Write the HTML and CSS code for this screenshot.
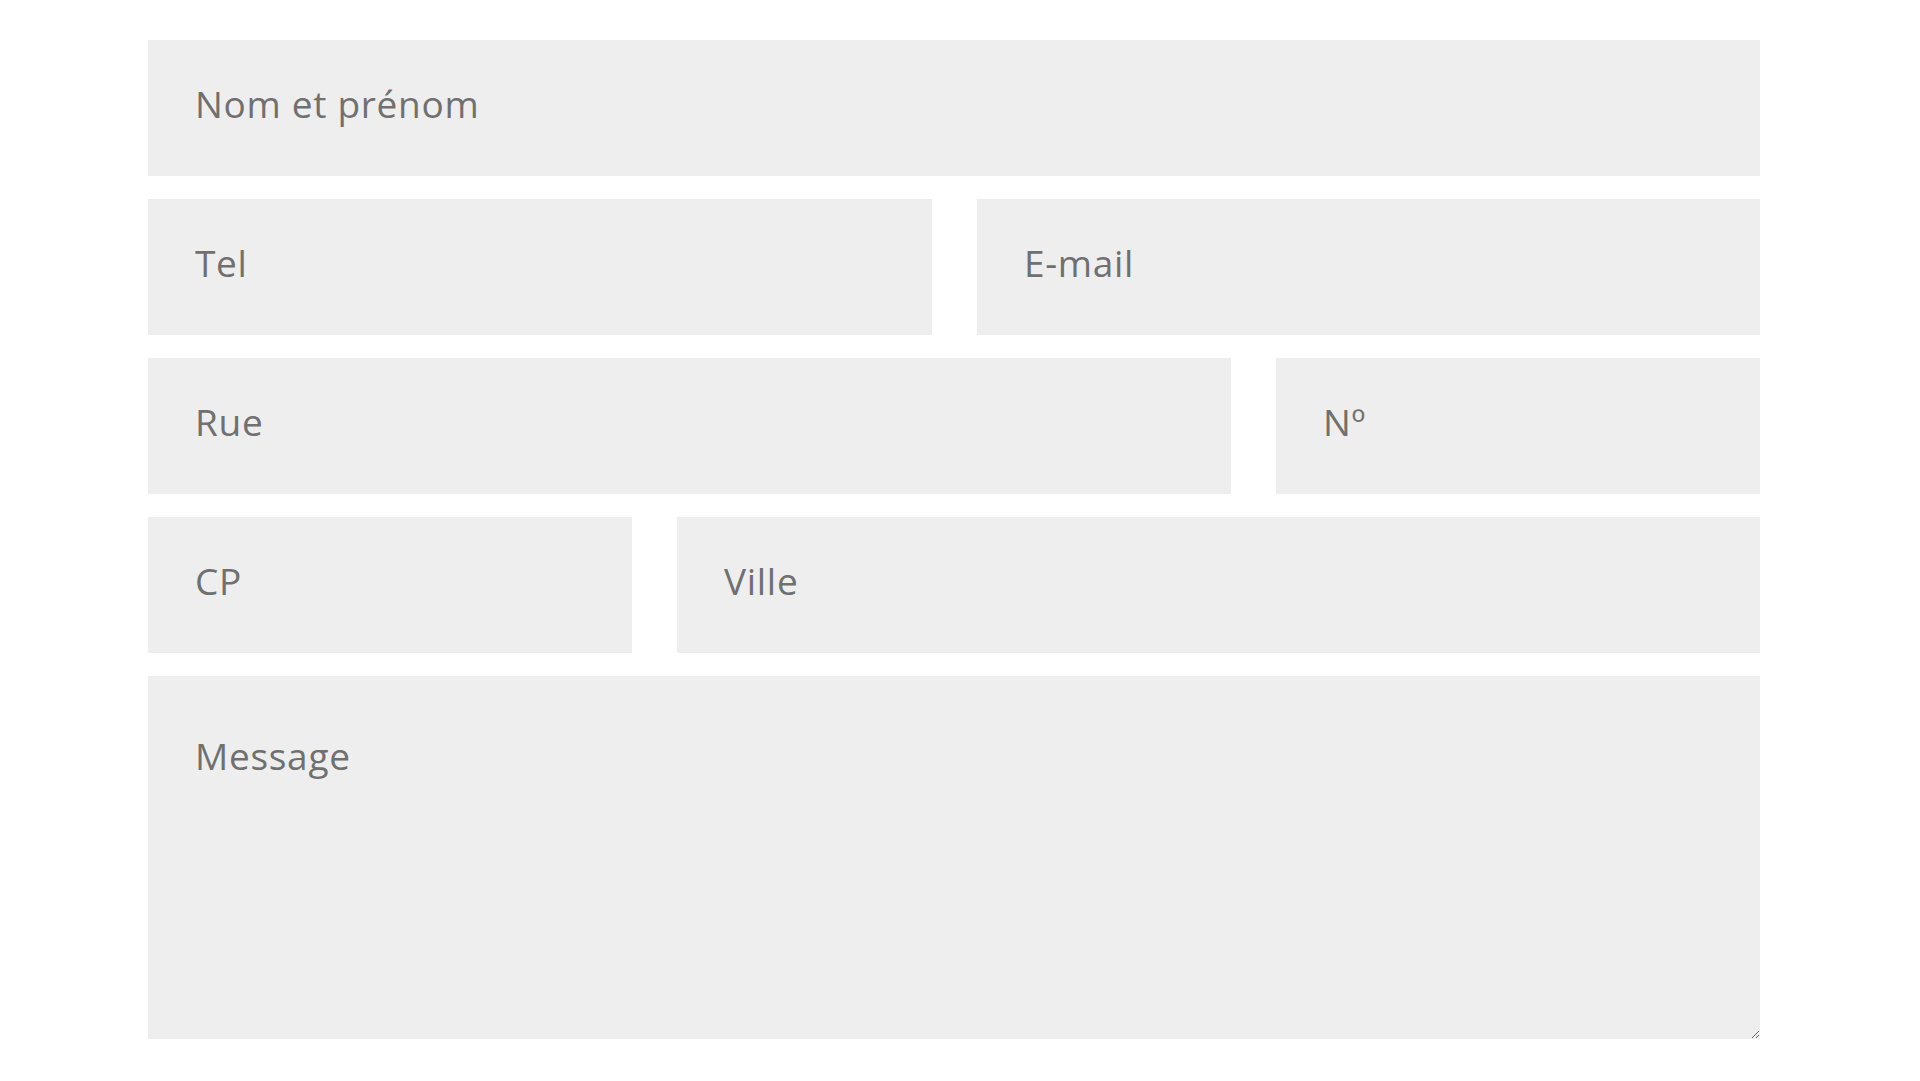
FILE: index.html
```html
<!DOCTYPE html>
<html lang="fr">
<head>
<meta charset="utf-8">
<title>Contact</title>
<link rel="stylesheet" href="styles.css">
</head>
<body>
<form class="form">
  <div class="row row-full">
    <input class="field" type="text" placeholder="Nom et prénom">
  </div>
  <div class="row row-half">
    <input class="field" type="tel" placeholder="Tel">
    <input class="field" type="email" placeholder="E-mail">
  </div>
  <div class="row row-wide-narrow">
    <input class="field" type="text" placeholder="Rue">
    <input class="field" type="text" placeholder="Nº">
  </div>
  <div class="row row-narrow-wide">
    <input class="field" type="text" placeholder="CP">
    <input class="field" type="text" placeholder="Ville">
  </div>
  <div class="row row-full">
    <textarea class="field field-message" placeholder="Message"></textarea>
  </div>
</form>
</body>
</html>
```
FILE: styles.css
```css
html, body {
  margin: 0;
  padding: 0;
  background: #ffffff;
}

.form {
  width: 1612px;
  margin: 40px 0 0 148px;
  display: flex;
  flex-direction: column;
  gap: 23px;
}

.row {
  display: grid;
  column-gap: 45px;
}

.row-full { grid-template-columns: 1fr; }
.row-half { grid-template-columns: 784px 1fr; }
.row-wide-narrow { grid-template-columns: 1083px 1fr; }
.row-narrow-wide { grid-template-columns: 484px 1fr; }

.field {
  box-sizing: border-box;
  height: 136px;
  width: 100%;
  margin: 0;
  border: none;
  outline: none;
  background: #eeeeee;
  padding: 0 0 9px 47px;
  font-family: "Open Sans", "Liberation Sans", sans-serif;
  font-size: 37px;
  letter-spacing: 0.7px;
  color: #6f6f6f;
  border-radius: 0;
}

.field::placeholder {
  color: #707070;
  opacity: 1;
}

.field-message {
  display: block;
  height: 363px;
  padding: 52px 47px 0 47px;
  line-height: 1.5;
  resize: vertical;
}
```
